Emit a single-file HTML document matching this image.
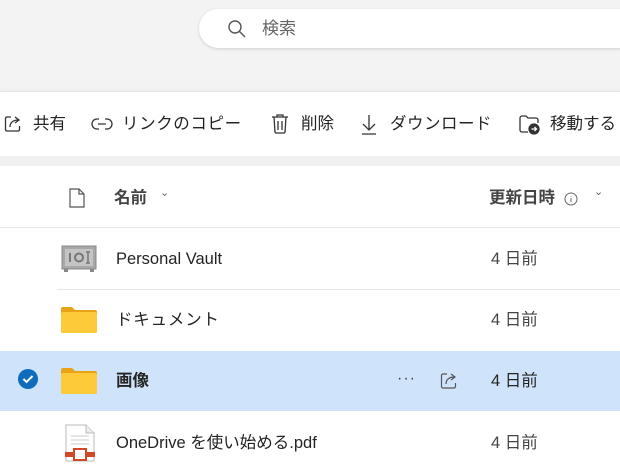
<!DOCTYPE html>
<html><head><meta charset="utf-8"><style>
body{margin:0;width:620px;height:464px;overflow:hidden;background:#fff;font-family:"Liberation Sans","Noto Sans CJK JP",sans-serif;color:#242424;position:relative}
.a{position:absolute}
.top{left:0;top:0;width:620px;height:91px;background:#f3f3f3}
.search{left:199px;top:9px;width:440px;height:39px;background:#fff;border-radius:20px;box-shadow:0 1px 3px rgba(0,0,0,.15)}
.tb{left:0;top:91px;width:620px;height:64px;background:#fff;border-top:1px solid #e6e6e6;box-shadow:0 3px 6px rgba(0,0,0,.15)}
.gap{left:0;top:156px;width:620px;height:10px;background:#f0f0f0}
.t{font-size:16.5px;white-space:nowrap;line-height:20px}
.sel{left:0;top:351px;width:620px;height:60px;background:#cfe4fa}
.ln{height:1px;background:#e8e8e8}
svg{position:absolute}
</style></head><body>
<div class="a top"></div>
<div class="a search"></div>
<svg style="left:227px;top:19px" width="20" height="20" viewBox="0 0 20 20" fill="none" stroke="#555" stroke-width="1.4"><circle cx="8" cy="8" r="6"/><path d="M12.5 12.5L18 18"/></svg>
<div class="a t" style="left:262px;top:19px;color:#666;font-size:17px">検索</div>
<div class="a tb"></div>
<div class="a gap"></div>
<svg style="left:3px;top:114px" width="20" height="20" viewBox="0 0 20 20" fill="none" stroke="#333" stroke-width="1.3"><path d="M8 3H4a1.5 1.5 0 0 0-1.5 1.5v11A1.5 1.5 0 0 0 4 17h11a1.5 1.5 0 0 0 1.5-1.5V12"/><path d="M7 13c0-5 4-7 8-7M12 3l4 3-4 3"/></svg>
<div class="a t" style="left:33px;top:114px">共有</div>
<svg style="left:91px;top:117px" width="22" height="14" viewBox="0 0 22 14" fill="none" stroke="#333" stroke-width="1.3"><path d="M8 2H6a5 5 0 0 0 0 10h2M14 2h2a5 5 0 0 1 0 10h-2M7 7h8"/></svg>
<div class="a t" style="left:122px;top:114px;letter-spacing:0.6px">リンクのコピー</div>
<svg style="left:270px;top:113px" width="20" height="22" viewBox="0 0 20 22" fill="none" stroke="#333" stroke-width="1.3"><path d="M2 4h16M7 4V2h6v2M4 4l1 15a1.5 1.5 0 0 0 1.5 1h7a1.5 1.5 0 0 0 1.5-1L16 4M8 8v9M12 8v9"/></svg>
<div class="a t" style="left:301px;top:114px">削除</div>
<svg style="left:360px;top:113px" width="18" height="22" viewBox="0 0 18 22" fill="none" stroke="#333" stroke-width="1.3"><path d="M9 2v15M3 11l6 6 6-6M2 21h14"/></svg>
<div class="a t" style="left:390px;top:114px;letter-spacing:0.5px">ダウンロード</div>
<svg style="left:518px;top:114px" width="24" height="22" viewBox="0 0 24 22" fill="none" stroke="#333" stroke-width="1.3"><path d="M10 18H4a2 2 0 0 1-2-2V4a2 2 0 0 1 2-2h4l2 2h8a2 2 0 0 1 2 2v3"/><circle cx="16" cy="15" r="5" fill="#333"/><path d="M13.5 15h5M16.5 13l2 2-2 2" stroke="#fff"/></svg>
<div class="a t" style="left:550px;top:114px">移動する</div>
<svg style="left:68px;top:187px" width="18" height="22" viewBox="0 0 18 22" fill="none" stroke="#555" stroke-width="1.2"><path d="M2 2h9l5 5v13H2z"/><path d="M11 2v5h5"/></svg>
<div class="a t" style="left:114px;top:188px;font-weight:bold;color:#444">名前</div>
<div class="a" style="left:160px;top:186px;font-size:11px;color:#666">⌄</div>
<div class="a t" style="left:489px;top:188px;font-weight:bold;color:#444">更新日時</div>
<svg style="left:564px;top:192px" width="14" height="14" viewBox="0 0 14 14" fill="none" stroke="#666" stroke-width="1"><circle cx="7" cy="7" r="6"/><path d="M7 6v4M7 4v.5"/></svg>
<div class="a" style="left:594px;top:185px;font-size:11px;color:#666">⌄</div>
<div class="a ln" style="left:0;top:227px;width:620px"></div>
<svg style="left:61px;top:245px" width="36" height="28" viewBox="0 0 36 28"><rect x="1" y="1" width="34" height="23" fill="#a8a8a8" stroke="#888"/><rect x="4" y="4" width="28" height="17" fill="#c4c4c4"/><path d="M9 8v9" stroke="#777" stroke-width="2"/><circle cx="18" cy="12.5" r="4" fill="none" stroke="#777" stroke-width="2"/><path d="M27 7v11M25 7h4M25 18h4" stroke="#777" stroke-width="1.5"/><rect x="3" y="24" width="4" height="3" fill="#888"/><rect x="29" y="24" width="4" height="3" fill="#888"/></svg>
<div class="a t" style="left:116px;top:249px">Personal Vault</div>
<div class="a t" style="left:491px;top:249px;color:#444">4 日前</div>
<div class="a ln" style="left:57px;top:289px;width:563px"></div>
<svg style="left:61px;top:306px" width="36" height="28" viewBox="0 0 36 28"><path d="M0 3a2 2 0 0 1 2-2h9l3 3h20a2 2 0 0 1 2 2v19a2 2 0 0 1-2 2H2a2 2 0 0 1-2-2z" fill="#e8a317"/><path d="M0 8a2 2 0 0 1 2-2h32a2 2 0 0 1 2 2v17a2 2 0 0 1-2 2H2a2 2 0 0 1-2-2z" fill="#fdca3a"/></svg>
<div class="a t" style="left:116px;top:310px;letter-spacing:0.8px">ドキュメント</div>
<div class="a t" style="left:491px;top:310px;color:#444">4 日前</div>
<div class="a sel"></div>
<svg style="left:17px;top:368px" width="22" height="22" viewBox="0 0 22 22"><circle cx="11" cy="11" r="10" fill="#0f6cbd"/><path d="M6.5 11l3 3 6-6" fill="none" stroke="#fff" stroke-width="2"/></svg>
<svg style="left:61px;top:367px" width="36" height="28" viewBox="0 0 36 28"><path d="M0 3a2 2 0 0 1 2-2h9l3 3h20a2 2 0 0 1 2 2v19a2 2 0 0 1-2 2H2a2 2 0 0 1-2-2z" fill="#e8a317"/><path d="M0 8a2 2 0 0 1 2-2h32a2 2 0 0 1 2 2v17a2 2 0 0 1-2 2H2a2 2 0 0 1-2-2z" fill="#fdca3a"/></svg>
<div class="a t" style="left:116px;top:371px;font-weight:bold">画像</div>
<div class="a" style="left:397px;top:371px;font-size:16px;line-height:16px;color:#444;letter-spacing:1px">···</div>
<svg style="left:439px;top:371px" width="20" height="20" viewBox="0 0 20 20" fill="none" stroke="#555" stroke-width="1.2"><path d="M8 3H4a1.5 1.5 0 0 0-1.5 1.5v11A1.5 1.5 0 0 0 4 17h11a1.5 1.5 0 0 0 1.5-1.5V12"/><path d="M7 13c0-5 4-7 8-7M12 3l4 3-4 3"/></svg>
<div class="a t" style="left:491px;top:371px">4 日前</div>
<svg style="left:64px;top:424px" width="32" height="38" viewBox="0 0 32 38"><path d="M2 1h20l8 8v28H2z" fill="#fff" stroke="#bbb"/><path d="M22 1v8h8" fill="#eee" stroke="#bbb"/><path d="M7 12h18M7 16h18M7 20h18" stroke="#ccc"/><rect x="1" y="28" width="8" height="5" fill="#d24726"/><rect x="23" y="28" width="8" height="5" fill="#d24726"/><rect x="10" y="25" width="12" height="11" fill="#fff" stroke="#d24726" stroke-width="2"/></svg>
<div class="a t" style="left:116px;top:433px">OneDrive を使い始める.pdf</div>
<div class="a t" style="left:491px;top:433px;color:#444">4 日前</div>
</body></html>
